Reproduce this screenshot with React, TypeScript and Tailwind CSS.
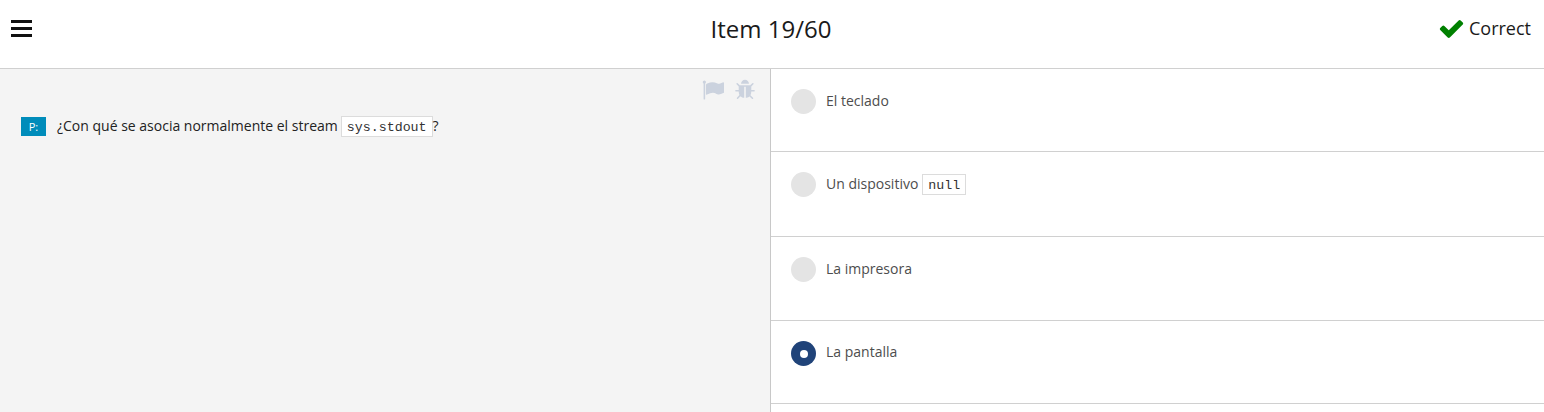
import React from "react";

const FLAG =
  "M320 256q0 72-64 110v1266q0 13-9.5 22.5t-22.5 9.5h-64q-13 0-22.5-9.5t-9.5-22.5v-1266q-64-38-64-110 0-53 37.5-90.5t90.5-37.5 90.5 37.5 37.5 90.5zm1472 64v763q0 25-12.5 38.5t-39.5 27.5q-215 116-369 116-61 0-123.5-22t-108.5-48-115.5-48-142.5-22q-192 0-464 146-17 9-33 9-26 0-45-19t-19-45v-742q0-32 31-55 21-14 79-43 236-120 421-120 107 0 200 29t219 88q38 19 88 19 54 0 117.5-21t110-47 88-47 54.5-21q26 0 45 19t19 45z";
const BUG =
  "M1696 960q0 26-19 45t-45 19h-224q0 171-67 290l208 209q19 19 19 45t-19 45q-18 19-45 19t-45-19l-198-197q-5 5-15 13t-42 28.5-65 36.5-82 29-97 13v-896h-128v896q-51 0-101.5-13.5t-87-33-66-39-43.5-32.5l-15-14-183 207q-20 21-48 21-24 0-43-16-19-18-20.5-44.5t15.5-46.5l202-227q-58-114-58-274h-224q-26 0-45-19t-19-45 19-45 45-19h224v-294l-173-173q-19-19-19-45t19-45 45-19 45 19l173 173h844l173-173q19-19 45-19t45 19 19 45-19 45l-173 173v294h224q26 0 45 19t19 45zm-480-576h-640q0-133 93.5-226.5t226.5-93.5 226.5 93.5 93.5 226.5z";
const CHECK =
  "M1671 566q0 40-28 68l-724 724-136 136q-28 28-68 28t-68-28l-136-136-362-362q-28-28-28-68t28-68l136-136q28-28 68-28t68 28l294 295 656-657q28-28 68-28t68 28l136 136q28 28 28 68z";

function Code({ children }: { children: React.ReactNode }) {
  return (
    <code className="inline-block h-[21px] border border-[#dcdcdc] bg-white px-[5px] pt-px font-['Liberation_Mono',monospace] text-[13.3px] leading-[20px] text-[#333]">
      {children}
    </code>
  );
}

function Option({
  selected,
  height,
  labelHeight = "h-[22px]",
  children,
}: {
  selected?: boolean;
  height: string;
  labelHeight?: string;
  children: React.ReactNode;
}) {
  return (
    <label className={`flex shrink-0 items-start border-b border-[#d0d0d0] pl-5 pt-5 ${height}`}>
      <span
        className={`flex size-[25px] shrink-0 items-center justify-center rounded-full ${selected ? "bg-[#204379]" : "bg-[#e4e4e4]"}`}
      >
        {selected && <span className="size-2 rounded-full bg-white" />}
      </span>
      <span className={`ml-[10px] flex items-center text-[14px] text-[#4d4d4d] ${labelHeight}`}>{children}</span>
    </label>
  );
}

export default function App() {
  return (
    <div className="flex h-[412px] w-full flex-col overflow-hidden bg-white font-['Open_Sans','Noto_Sans',sans-serif] text-[#1a1a1a]">
      <header className="grid h-[69px] shrink-0 grid-cols-3 border-b border-[#d0d0d0]">
        <button className="ml-[11px] mt-5 flex w-[21px] flex-col gap-1 self-start" aria-label="Menu">
          <span className="h-[3px] w-full bg-[#111]" />
          <span className="h-[3px] w-full bg-[#111]" />
          <span className="h-[3px] w-full bg-[#111]" />
        </button>
        <h1 className="pr-[2px] pt-[13px] text-center text-[24px] leading-8">Item 19/60</h1>
        <div className="flex h-[57px] items-center justify-end pr-[13px] text-[18px]">
          <svg viewBox="0 0 1792 1792" className="mb-px mr-[4px] size-[27px] fill-[#008000]">
            <path d={CHECK} />
          </svg>
          Correct
        </div>
      </header>
      <main className="flex min-h-0 flex-1">
        <section className="w-[771px] shrink-0 border-r border-[#c8c8c8] bg-[#f4f4f4]">
          <div className="flex h-[43px] justify-end gap-[10px] pr-[14px] pt-[10px]">
            <svg viewBox="0 0 1792 1792" className="size-[22px] fill-[#cbd2de]">
              <path d={FLAG} />
            </svg>
            <svg viewBox="0 0 1792 1792" className="size-[22px] fill-[#cbd2de]">
              <path d={BUG} />
            </svg>
          </div>
          <div className="flex h-[29px] items-center pl-[21px] text-[14px] text-[#222]">
            <span className="mr-[11px] flex h-[19px] w-[25px] items-center justify-center bg-[#008cba] pt-px text-[11px] text-white">
              P:
            </span>
            <span className="mr-[3px] pb-[2px]">¿Con qué se asocia normalmente el stream</span>
            <Code>sys.stdout</Code>
            <span className="pb-[2px]">?</span>
          </div>
        </section>
        <section className="flex min-w-0 flex-1 flex-col overflow-hidden">
          <Option height="h-[83px]">El teclado</Option>
          <Option height="h-[85px]" labelHeight="h-6">
            <span className="mr-1 pb-[2px]">Un dispositivo</span>
            <Code>null</Code>
          </Option>
          <Option height="h-[84px]">La impresora</Option>
          <Option height="h-[83px]" labelHeight="h-5" selected>
            La pantalla
          </Option>
        </section>
      </main>
    </div>
  );
}
